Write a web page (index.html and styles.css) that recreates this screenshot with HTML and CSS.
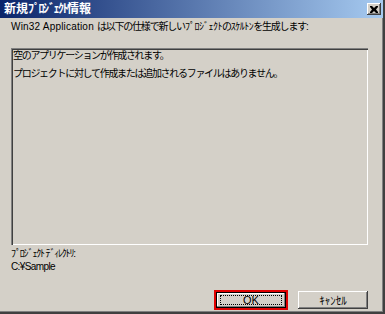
FILE: index.html
```html
<!DOCTYPE html>
<html lang="ja">
<head>
  <meta charset="UTF-8">
  <title>新規プロジェクト情報</title>
  <link rel="stylesheet" href="styles.css">
</head>
<body>

  <div class="window">
    <div class="titlebar">
      <span class="title">新規<span class="hw">ﾌﾟﾛｼﾞｪｸﾄ</span>情報</span>
      <div class="close">
        <svg width="8" height="7" viewBox="0 0 8 7">
          <path d="M0 0h2l2 2 2-2h2v1l-2 2.5 2 2.5v1h-2l-2-2-2 2h-2v-1l2-2.5-2-2.5z" fill="#000"/>
        </svg>
      </div>
    </div>

    <div class="content">
      <div class="intro"><span class="latin">Win32 Application </span>は以下の仕様で新しい<span class="hw">ﾌﾟﾛｼﾞｪｸﾄ</span>の<span class="hw">ｽｹﾙﾄﾝ</span>を生成します:</div>

      <div class="info-box">
        <p>空のアプリケーションが作成されます。</p>
        <p>プロジェクトに対して作成または追加されるファイルはありません。</p>
      </div>

      <div class="dir-label hw">ﾌﾟﾛｼﾞｪｸﾄ ﾃﾞｨﾚｸﾄﾘ:</div>
      <div class="dir-path">C:¥Sample</div>

      <div class="buttons">
        <div class="highlight">
          <button class="btn default"><span class="focus">OK</span></button>
        </div>
        <button class="btn"><span class="hw">ｷｬﾝｾﾙ</span></button>
      </div>
    </div>
  </div>

</body>
</html>
```

FILE: styles.css
```css
body {
  margin: 0;
  padding: 0;
  background: #d4d0c8;
  font-family: "Liberation Sans", "Noto Sans CJK JP", sans-serif;
  font-size: 10px;
  color: #000;
}

.hw {
  letter-spacing: -0.9px;
}

.window {
  width: 383px;
  height: 312px;
  background: #d4d0c8;
  border-right: 2px solid #404040;
  border-bottom: 2px solid #404040;
  box-shadow: inset -1px -1px 0 #808080;
  display: flex;
  flex-direction: column;
}

.titlebar {
  height: 18px;
  background: linear-gradient(to right, #0a246a, #a6caf0);
  display: flex;
  align-items: center;
  justify-content: space-between;
  padding: 0 1px 0 4px;
}

.title {
  color: white;
  font-weight: bold;
  font-size: 12px;
  line-height: 18px;
}

.title .hw {
  letter-spacing: -1.5px;
}

.close {
  width: 14px;
  height: 12px;
  background: #d4d0c8;
  box-shadow: inset -1px -1px 0 #404040, inset 1px 1px 0 #fff, inset -2px -2px 0 #808080;
  display: flex;
  align-items: center;
  justify-content: center;
  margin-right: 1px;
}

.content {
  flex: 1;
  padding: 1px 15px 0 11px;
  display: flex;
  flex-direction: column;
}

.intro {
  height: 16px;
  line-height: 16px;
  letter-spacing: -1.2px;
  white-space: nowrap;
}

.intro .latin {
  letter-spacing: 0.2px;
}

.intro .hw {
  letter-spacing: -0.5px;
}

.info-box {
  margin-top: 13px;
  height: 197px;
  box-sizing: border-box;
  padding: 1px 2px;
  box-shadow: inset 1px 1px 0 #808080, inset 2px 2px 0 #404040, inset -1px -1px 0 #fff, inset -2px -2px 0 #d4d0c8;
}

.info-box p {
  margin: 0 0 4px 0;
  line-height: 14px;
  letter-spacing: -1.3px;
  white-space: nowrap;
}

.dir-label {
  margin-top: 2px;
  line-height: 13px;
  letter-spacing: -1.2px;
}

.dir-path {
  line-height: 13px;
  letter-spacing: -0.6px;
}

.buttons {
  margin-top: auto;
  margin-bottom: 2px;
  display: flex;
  justify-content: flex-end;
  align-items: center;
  gap: 10px;
}

.highlight {
  border: 2px solid #e00000;
  display: flex;
}

.btn {
  width: 70px;
  height: 18px;
  padding: 0;
  background: #d4d0c8;
  border: none;
  font-family: inherit;
  font-size: 11px;
  box-shadow: inset -1px -1px 0 #404040, inset 1px 1px 0 #fff, inset -2px -2px 0 #808080;
}

.btn .hw {
  letter-spacing: 0;
}

.btn.default {
  width: 70px;
  height: 16px;
  padding: 2px 3px;
  border: 1px solid #000;
  display: flex;
  box-shadow: inset -1px -1px 0 #808080, inset 1px 1px 0 #fff;
}

.focus {
  flex: 1;
  border: 1px dotted #000;
  line-height: 8px;
}
```
